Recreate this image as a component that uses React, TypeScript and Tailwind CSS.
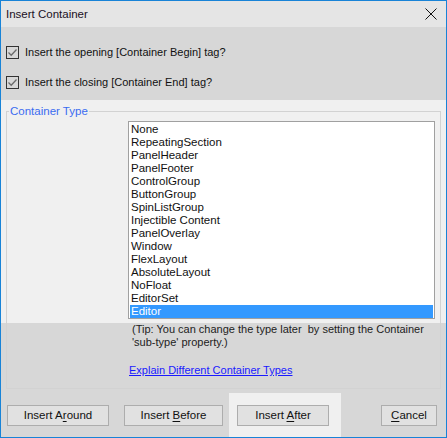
import React from 'react';

const items = [
  'None',
  'RepeatingSection',
  'PanelHeader',
  'PanelFooter',
  'ControlGroup',
  'ButtonGroup',
  'SpinListGroup',
  'Injectible Content',
  'PanelOverlay',
  'Window',
  'FlexLayout',
  'AbsoluteLayout',
  'NoFloat',
  'EditorSet',
  'Editor',
];

const CheckBox: React.FC = () => (
  <svg width="13" height="13" viewBox="0 0 13 13" className="shrink-0">
    <rect x="0.5" y="0.5" width="12" height="12" fill="none" stroke="#333333" />
    <path d="M2.5 6.5 L5.2 9.2 L10.5 3.5" fill="none" stroke="#6b6b6b" strokeWidth="1.3" />
  </svg>
);

const Btn: React.FC<{ pre: string; key_: string; post: string; w: string }> = ({ pre, key_, post, w }) => (
  <div
    className={`${w} h-[21px] border border-[#adadad] bg-[#e1e1e1] flex items-center justify-center text-[11.5px] text-[#111]`}
  >
    <span>
      {pre}
      <span className="underline underline-offset-2">{key_}</span>
      {post}
    </span>
  </div>
);

const App: React.FC = () => {
  return (
    <div
      className="w-[447px] h-[438px] border border-[#1883d7] bg-[#d7d7d7] flex flex-col text-[11px] leading-[13px] text-[#111] overflow-hidden"
      style={{ fontFamily: '"Liberation Sans", Arial, sans-serif' }}
    >
      {/* Title bar */}
      <div className="h-[26px] bg-[#e5e5e5] flex items-center justify-between pl-[5px] pr-[9px] shrink-0">
        <span className="text-[11.5px] text-[#1a1024]">Insert Container</span>
        <svg width="12" height="12" viewBox="0 0 12 12">
          <path d="M0.5 0.5 L11.5 11.5 M11.5 0.5 L0.5 11.5" stroke="#111" strokeWidth="1" />
        </svg>
      </div>

      {/* Checkboxes */}
      <div className="h-[73px] flex flex-col gap-[17px] pt-[19px] pl-[5px] shrink-0">
        <div className="flex items-center gap-[6px] h-[13px]">
          <CheckBox />
          <span>Insert the opening [Container Begin] tag?</span>
        </div>
        <div className="flex items-center gap-[6px] h-[13px]">
          <CheckBox />
          <span>Insert the closing [Container End] tag?</span>
        </div>
      </div>

      {/* Container type group */}
      <div className="h-[290px] bg-[linear-gradient(to_bottom,#f0f0f0_223px,#d7d7d7_223px)] pt-[11px] px-[5px] shrink-0">
        <div className="relative h-[278px] border border-[#d2d2d2]">
          <span className="absolute left-[2px] top-[-7px] leading-[13px] px-[1px] text-[11.5px] text-[#3b6cf0] bg-[#f0f0f0]">
            Container Type
          </span>
          <div className="pl-[121px] pt-[9px] pr-[5px]">
            <div className="border border-[#a0a0a0] bg-white px-[1px] py-[1px] h-[198px]">
              {items.map((it) => (
                <div
                  key={it}
                  className={`h-[13px] leading-[13px] pl-[1px] text-[11.5px] ${
                    it === 'Editor' ? 'bg-[#3399ff] text-white' : 'text-[#111]'
                  }`}
                >
                  {it}
                </div>
              ))}
            </div>
            <div className="pl-[4px] pt-[4px] leading-[13px] text-[#222] whitespace-nowrap">
              (Tip: You can change the type later&nbsp; by setting the Container
              <br />
              'sub-type' property.)
            </div>
            <div className="pl-[1px] pt-[15px] leading-[13px]">
              <span className="text-[#1a1aff] underline">Explain Different Container Types</span>
            </div>
          </div>
        </div>
      </div>

      {/* Buttons */}
      <div className="flex items-start pl-[6px] pt-[3px] shrink-0">
        <div className="pt-[12px]">
          <Btn pre="Insert A" key_="r" post="ound" w="w-[102px]" />
        </div>
        <div className="pt-[12px] ml-[15px]">
          <Btn pre="Insert " key_="B" post="efore" w="w-[99px]" />
        </div>
        <div className="ml-[6px] bg-[#f0f0f0] w-[112px] h-[45px] pt-[12px] pl-[8px]">
          <Btn pre="Insert " key_="A" post="fter" w="w-[92px]" />
        </div>
        <div className="pt-[12px] ml-[40px]">
          <Btn pre="" key_="C" post="ancel" w="w-[56px]" />
        </div>
      </div>
    </div>
  );
};

export default App;
